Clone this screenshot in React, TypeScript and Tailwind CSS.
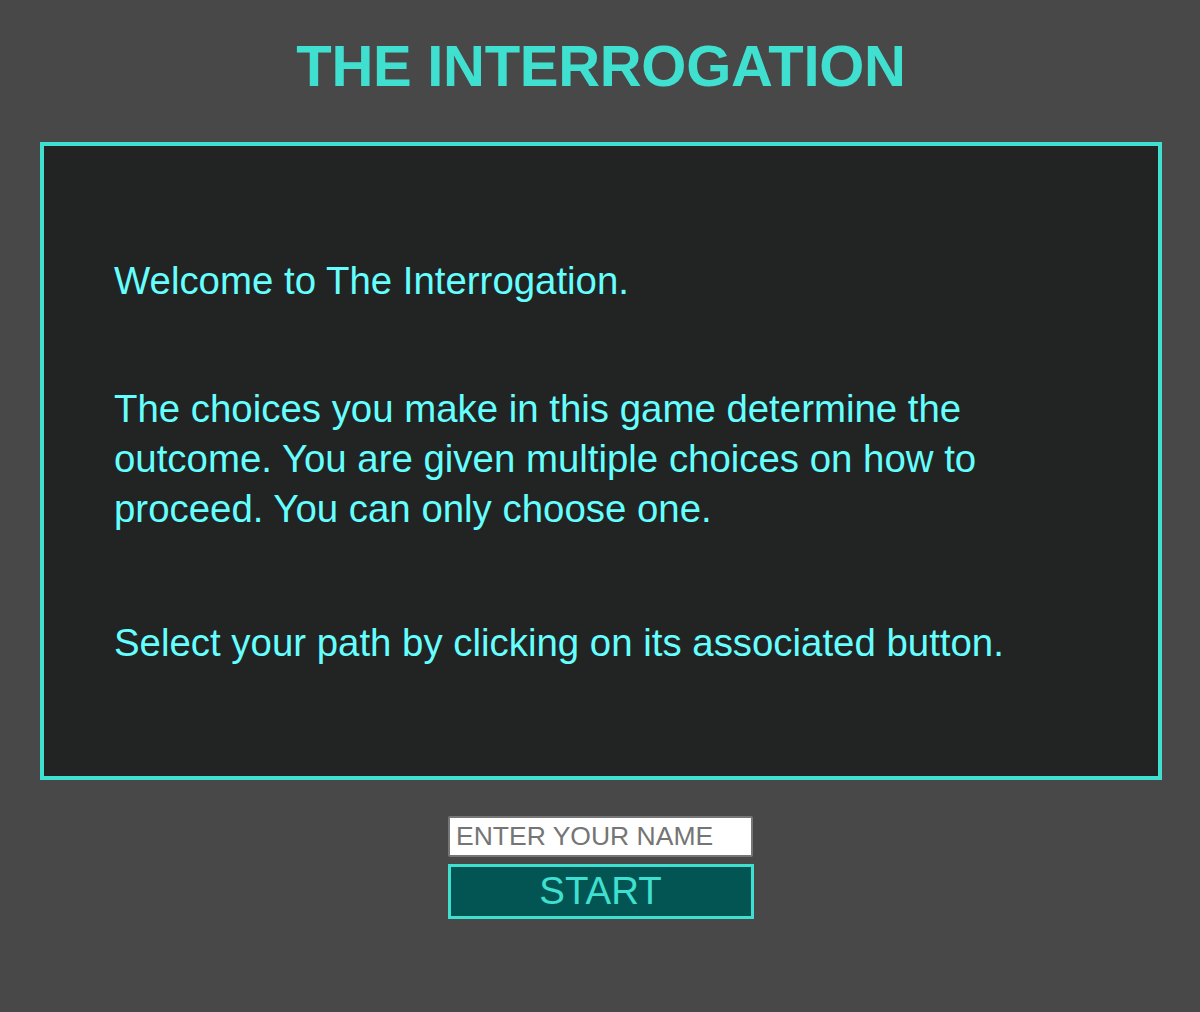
import React from 'react';

const paragraphs = [
  'Welcome to The Interrogation.',
  'The choices you make in this game determine the outcome. You are given multiple choices on how to proceed. You can only choose one.',
  'Select your path by clicking on its associated button.',
];

export default function App() {
  return (
    <div
      className="min-h-screen bg-[#484848] pt-[36px] pb-[90px]"
      style={{ fontFamily: '"Liberation Sans", Arial, Helvetica, sans-serif' }}
    >
      <h1 className="pl-[2px] text-center text-[58px] leading-[60px] font-bold tracking-[-0.3px] text-[#40e0d0]">
        THE INTERROGATION
      </h1>

      <div className="mt-[46px] ml-[40px] w-[1122px] border-[4px] border-[#40e0d0] bg-[#222424] pt-[110px] pb-[108px] pl-[70px] pr-[100px]">
        <p className="text-[38.4px] leading-[50px] text-[#66ffff]">{paragraphs[0]}</p>
        <p className="mt-[78px] text-[38.4px] leading-[50px] text-[#66ffff]">{paragraphs[1]}</p>
        <p className="mt-[84px] text-[38.4px] leading-[50px] text-[#66ffff]">{paragraphs[2]}</p>
      </div>

      <div className="mt-[36px] flex flex-col items-center gap-[7px] pl-[1px]">
        <input
          type="text"
          placeholder="ENTER YOUR NAME"
          className="h-[41px] w-[305px] rounded-[2px] border-2 border-[#767676] bg-white pl-[6px] text-[26.5px] text-black placeholder:text-[#757575] outline-none"
        />
        <button className="h-[55px] w-[306px] border-[3px] border-[#40e0d0] bg-[#025553] text-[38.4px] leading-none text-[#40e0d0]">
          START
        </button>
      </div>
    </div>
  );
}
